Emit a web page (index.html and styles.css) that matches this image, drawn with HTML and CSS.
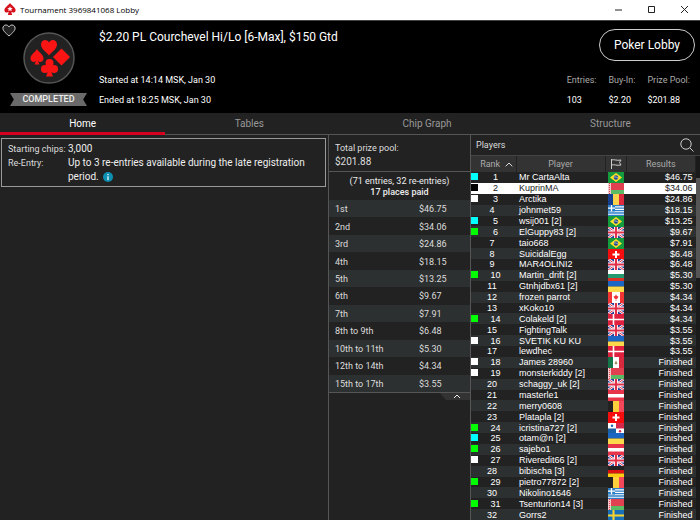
FILE: index.html
```html
<!DOCTYPE html>
<html lang="en">
<head>
  <meta charset="UTF-8">
  <title>Tournament 3969841068 Lobby</title>
  <link rel="stylesheet" href="styles.css">
</head>
<body>
  <!-- Flags, 16x11 each -->
  <svg class="defs" aria-hidden="true">
    <symbol id="br" viewBox="0 0 16 11"><path fill="#149b3e" d="M0 0h16v11H0z"/><path fill="#ffdf2b" d="M8 1l6 4.500-6 4.500-6-4.500z"/><circle cx="8" cy="5.500" r="2.200" fill="#1a4a8c"/><path d="M6 5q2-.6 4 1" stroke="#fff" stroke-width=".6" fill="none"/></symbol>
    <symbol id="by" viewBox="0 0 16 11"><path fill="#e0404f" d="M0 0h16v7H0z"/><path fill="#5cba64" d="M0 7h16v4H0z"/><path fill="#f3c9cc" d="M0 0h3v11H0z"/><path stroke="#e0404f" stroke-dasharray="1 1" d="M1.500 0v11"/></symbol>
    <symbol id="ro" viewBox="0 0 16 11"><path fill="#173f91" d="M0 0h6v11H0z"/><path fill="#fcd34d" d="M5 0h6v11H5z"/><path fill="#dd2a3f" d="M11 0h5v11h-5z"/></symbol>
    <symbol id="gr" viewBox="0 0 16 11"><path fill="#fff" d="M0 0h16v11H0z"/><path stroke="#2c7fc6" stroke-width="1.300" d="M0 .6h16M0 3.100h16M0 5.600h16M0 8h16M0 10.400h16"/><path fill="#2c7fc6" d="M0 0h7v6.500H0z"/><path stroke="#fff" stroke-width="1.300" d="M3.500 0v6.500M0 3.200h7"/></symbol>
    <symbol id="gb" viewBox="0 0 16 11"><path fill="#263f96" d="M0 0h16v11H0z"/><path stroke="#fff" stroke-width="2.400" d="M0 0l16 11M16 0L0 11"/><path stroke="#e0304a" stroke-width="1" d="M0 0l16 11M16 0L0 11"/><path stroke="#fff" stroke-width="4" d="M8 0v11M0 5.500h16"/><path stroke="#e0304a" stroke-width="2.200" d="M8 0v11M0 5.500h16"/></symbol>
    <symbol id="ch" viewBox="0 0 16 11"><path fill="#f60d0d" d="M0 0h16v11H0z"/><path stroke="#fff" stroke-width="2" d="M8 2v7M4.500 5.500h7"/></symbol>
    <symbol id="bg" viewBox="0 0 16 11"><path fill="#fff" d="M0 0h16v4H0z"/><path fill="#23996f" d="M0 4h16v4H0z"/><path fill="#dc3224" d="M0 8h16v3H0z"/></symbol>
    <symbol id="ua" viewBox="0 0 16 11"><path fill="#1b66c2" d="M0 0h16v5.500H0z"/><path fill="#fbd94a" d="M0 5.500h16V11H0z"/></symbol>
    <symbol id="ca" viewBox="0 0 16 11"><path fill="#fff" d="M0 0h16v11H0z"/><path fill="#f23434" d="M0 0h4v11H0zM12 0h4v11h-4zM8 2.500l1 1.500 1.500.5-1 2-1.200.5V9h-.6V7l-1.200-.5-1-2L7 4z"/></symbol>
    <symbol id="dk" viewBox="0 0 16 11"><path fill="#e0203f" d="M0 0h16v11H0z"/><path stroke="#fff" stroke-width="1.600" d="M5.500 0v11M0 5.500h16"/></symbol>
    <symbol id="mx" viewBox="0 0 16 11"><path fill="#fff" d="M0 0h16v11H0z"/><path fill="#15764a" d="M0 0h5v11H0z"/><path fill="#d9293f" d="M11 0h5v11h-5z"/><path fill="#a58a5c" d="M6.500 6.500L8 3.500l1.500 3L8 7.500z"/></symbol>
    <symbol id="at" viewBox="0 0 16 11"><path fill="#e8344a" d="M0 0h16v11H0z"/><path fill="#fff" d="M0 4h16v3.500H0z"/></symbol>
    <symbol id="be" viewBox="0 0 16 11"><path fill="#222" d="M0 0h5v11H0z"/><path fill="#fccf3c" d="M5 0h6v11H5z"/><path fill="#f4485a" d="M11 0h5v11h-5z"/></symbol>
    <symbol id="pa" viewBox="0 0 16 11"><path fill="#fff" d="M0 0h16v11H0z"/><path fill="#d8284a" d="M8 0h8v5.500H8z"/><path fill="#1a61a8" d="M0 5.500h8V11H0z"/><circle cx="4" cy="2.700" r="1.200" fill="#1a61a8"/><circle cx="12" cy="8.200" r="1.200" fill="#d8284a"/></symbol>
    <symbol id="de" viewBox="0 0 16 11"><path fill="#222" d="M0 0h16v4H0z"/><path fill="#dc1212" d="M0 4h16v3.500H0z"/><path fill="#fccc12" d="M0 7.500h16V11H0z"/></symbol>
    <symbol id="se" viewBox="0 0 16 11"><path fill="#1a70b8" d="M0 0h16v11H0z"/><path stroke="#fcd32b" stroke-width="2" d="M5.500 0v11M0 5.500h16"/></symbol>
  </svg>

  <header class="titlebar">
    <svg class="app-icon" viewBox="0 0 12 12"><path fill="#d5101a" d="M6 0C5 2 .4 4.200.4 7.200c0 2.200 2.700 3.100 4.300 1.600L3.900 12h4.200l-.8-3.200c1.600 1.500 4.300.6 4.300-1.600C11.600 4.200 7 2 6 0z"/><path fill="#fff" d="M6 3.300l.8 1.800 1.900.1-1.500 1.200.6 1.900L6 7.200 4.200 8.300l.6-1.900-1.500-1.200 1.900-.1z"/></svg>
    <span class="caption">Tournament 3969841068 Lobby</span>
    <div class="window-buttons">
      <button aria-label="Minimize"><svg viewBox="0 0 9 9"><path d="M1 5h7"/></svg></button>
      <button aria-label="Maximize"><svg viewBox="0 0 9 9"><path d="M1.500 1.500h6v6h-6z"/></svg></button>
      <button aria-label="Close"><svg viewBox="0 0 9 9"><path d="M1 1l7 7M8 1L1 8"/></svg></button>
    </div>
  </header>

  <section class="summary">
    <button class="favourite" aria-label="Favourite"><svg viewBox="0 0 14 13"><path d="M7 12C3 8.500.9 6.500.9 4.200.9 2.400 2.200 1 3.900 1 5.200 1 6.400 1.700 7 3c.6-1.300 1.800-2 3.100-2 1.700 0 3 1.400 3 3.200C13.100 6.500 11 8.500 7 12z"/></svg></button>
    <div class="badge">
      <svg class="suits" viewBox="0 0 52 52">
        <circle cx="26" cy="26" r="25" fill="#222" stroke="#555" stroke-width="1.500"/>
        <g fill="#fb1414">
          <path d="M26 23.500c-3-4-8-6.500-8-11 0-5.500 6.500-6 8-2 1.500-4 8-3.500 8 2 0 4.500-5 7-8 11z"/>
          <path d="M38.500 16.500l8.500 8.500-8.500 8.500L30 25z"/>
          <path d="M14 17c2 3.500 6.500 5.500 6.500 9.500 0 3.500-3.500 4.500-5.500 2.500l1.500 3.500h-5L13 29c-2 2-5.500 1-5.500-2.500 0-4 4.500-6 6.500-9.500z"/>
          <circle cx="26.500" cy="31" r="4"/><circle cx="22" cy="37" r="4.100"/><circle cx="31" cy="37" r="4.100"/>
          <path d="M25 33h3l.3 7 1.700 4.500h-7l1.700-4.500z"/>
        </g>
      </svg>
      <span class="status">COMPLETED</span>
    </div>
    <div class="event">
      <h1>$2.20 PL Courchevel Hi/Lo [6-Max], $150 Gtd</h1>
      <p>Started at 14:14 MSK, Jan 30</p>
      <p>Ended at 18:25 MSK, Jan 30</p>
    </div>
    <div class="side">
      <button class="lobby">Poker Lobby</button>
      <dl class="stats">
        <div><dt>Entries:</dt><dd>103</dd></div>
        <div><dt>Buy-In:</dt><dd>$2.20</dd></div>
        <div><dt>Prize Pool:</dt><dd>$201.88</dd></div>
      </dl>
    </div>
  </section>

  <nav class="tabs">
    <a class="active" href="#home">Home</a>
    <a href="#tables">Tables</a>
    <a href="#chips">Chip Graph</a>
    <a href="#structure">Structure</a>
  </nav>

  <main class="columns">
    <section class="info">
      <dl class="info-box">
        <dt>Starting chips:</dt><dd>3,000</dd>
        <dt>Re-Entry:</dt><dd>Up to 3 re-entries available during the late registration period. <svg class="info-icon" viewBox="0 0 10 10"><circle cx="5" cy="5" r="5" fill="#0d8fb0"/><path d="M5 4.200V8M5 2v1.200" stroke="#fff" stroke-width="1.200"/></svg></dd>
      </dl>
    </section>

    <section class="prizes">
      <div class="pool">
        <span>Total prize pool:</span>
        <strong>$201.88</strong>
      </div>
      <div class="entries">
        <span>(71 entries, 32 re-entries)</span>
        <strong>17 places paid</strong>
      </div>
      <table class="payouts">
        <tr><td>1st</td><td>$46.75</td></tr>
        <tr><td>2nd</td><td>$34.06</td></tr>
        <tr><td>3rd</td><td>$24.86</td></tr>
        <tr><td>4th</td><td>$18.15</td></tr>
        <tr><td>5th</td><td>$13.25</td></tr>
        <tr><td>6th</td><td>$9.67</td></tr>
        <tr><td>7th</td><td>$7.91</td></tr>
        <tr><td>8th to 9th</td><td>$6.48</td></tr>
        <tr><td>10th to 11th</td><td>$5.30</td></tr>
        <tr><td>12th to 14th</td><td>$4.34</td></tr>
        <tr><td>15th to 17th</td><td>$3.55</td></tr>
      </table>
      <div class="collapse">
        <button aria-label="Collapse"><svg viewBox="0 0 8 5"><path d="M1 4l3-3 3 3"/></svg></button>
      </div>
    </section>

    <section class="players">
      <div class="players-head">
        <h2>Players</h2>
        <button aria-label="Search"><svg viewBox="0 0 14 14"><circle cx="6" cy="6" r="5.200"/><path d="M9.700 9.700l3.800 3.800"/></svg></button>
      </div>
      <div class="list">
        <table class="ranking">
          <thead>
            <tr>
              <th class="rank">Rank <svg class="sort" viewBox="0 0 8 5"><path d="M.7 4.300L4 1l3.300 3.300"/></svg></th>
              <th class="player">Player</th>
              <th class="flag"><svg class="flag-icon" viewBox="0 0 12 10"><path d="M1.500 0v10M1.500 1c3-1 5 1 9.500 0L9.500 3.500 11 6c-4.500 1-6.500-1-9.500 0"/></svg></th>
              <th class="result">Results</th>
            </tr>
          </thead>
          <tbody>
            <tr class="cyan"><td>1</td><td>Mr CartaAlta</td><td><svg><use href="#br"/></svg></td><td>$46.75</td></tr>
            <tr class="black selected"><td>2</td><td>KuprinMA</td><td><svg><use href="#by"/></svg></td><td>$34.06</td></tr>
            <tr class="white"><td>3</td><td>Arctika</td><td><svg><use href="#ro"/></svg></td><td>$24.86</td></tr>
            <tr><td>4</td><td>johnmet59</td><td><svg><use href="#gr"/></svg></td><td>$18.15</td></tr>
            <tr class="cyan"><td>5</td><td>wsij001 [2]</td><td><svg><use href="#br"/></svg></td><td>$13.25</td></tr>
            <tr class="green"><td>6</td><td>ElGuppy83 [2]</td><td><svg><use href="#gb"/></svg></td><td>$9.67</td></tr>
            <tr><td>7</td><td>taio668</td><td><svg><use href="#br"/></svg></td><td>$7.91</td></tr>
            <tr><td>8</td><td>SuicidalEgg</td><td><svg><use href="#ch"/></svg></td><td>$6.48</td></tr>
            <tr><td>9</td><td>MAR4OLINI2</td><td><svg><use href="#gb"/></svg></td><td>$6.48</td></tr>
            <tr class="green"><td>10</td><td>Martin_drift [2]</td><td><svg><use href="#bg"/></svg></td><td>$5.30</td></tr>
            <tr><td>11</td><td>Gtnhjdbx61 [2]</td><td><svg><use href="#ua"/></svg></td><td>$5.30</td></tr>
            <tr><td>12</td><td>frozen parrot</td><td><svg><use href="#ca"/></svg></td><td>$4.34</td></tr>
            <tr><td>13</td><td>xKoko10</td><td><svg><use href="#gb"/></svg></td><td>$4.34</td></tr>
            <tr class="green"><td>14</td><td>Colakeld [2]</td><td><svg><use href="#dk"/></svg></td><td>$4.34</td></tr>
            <tr><td>15</td><td>FightingTalk</td><td><svg><use href="#gb"/></svg></td><td>$3.55</td></tr>
            <tr class="white"><td>16</td><td>SVETIK KU KU</td><td><svg><use href="#ua"/></svg></td><td>$3.55</td></tr>
            <tr><td>17</td><td>lewdhec</td><td><svg><use href="#dk"/></svg></td><td>$3.55</td></tr>
            <tr class="white"><td>18</td><td>James 28960</td><td><svg><use href="#mx"/></svg></td><td>Finished</td></tr>
            <tr class="white"><td>19</td><td>monsterkiddy [2]</td><td><svg><use href="#by"/></svg></td><td>Finished</td></tr>
            <tr><td>20</td><td>schaggy_uk [2]</td><td><svg><use href="#gb"/></svg></td><td>Finished</td></tr>
            <tr><td>21</td><td>masterle1</td><td><svg><use href="#at"/></svg></td><td>Finished</td></tr>
            <tr><td>22</td><td>merry0608</td><td><svg><use href="#be"/></svg></td><td>Finished</td></tr>
            <tr><td>23</td><td>Platapla [2]</td><td><svg><use href="#ch"/></svg></td><td>Finished</td></tr>
            <tr class="green"><td>24</td><td>icristina727 [2]</td><td><svg><use href="#pa"/></svg></td><td>Finished</td></tr>
            <tr class="cyan"><td>25</td><td>otam@n [2]</td><td><svg><use href="#ua"/></svg></td><td>Finished</td></tr>
            <tr class="green"><td>26</td><td>sajebo1</td><td><svg><use href="#at"/></svg></td><td>Finished</td></tr>
            <tr class="white"><td>27</td><td>Riveredit66 [2]</td><td><svg><use href="#gb"/></svg></td><td>Finished</td></tr>
            <tr><td>28</td><td>bibischa [3]</td><td><svg><use href="#de"/></svg></td><td>Finished</td></tr>
            <tr class="green"><td>29</td><td>pietro77872 [2]</td><td><svg><use href="#be"/></svg></td><td>Finished</td></tr>
            <tr><td>30</td><td>Nikolino1646</td><td><svg><use href="#gr"/></svg></td><td>Finished</td></tr>
            <tr class="green"><td>31</td><td>Tsenturion14 [3]</td><td><svg><use href="#by"/></svg></td><td>Finished</td></tr>
            <tr><td>32</td><td>Gorrs2</td><td><svg><use href="#se"/></svg></td><td>Finished</td></tr>
          </tbody>
        </table>
        <div class="scrollbar"><div class="thumb"></div></div>
      </div>
    </section>
  </main>
</body>
</html>
```
FILE: styles.css
```css
* {
  box-sizing: border-box;
}

body {
  display: flex;
  flex-direction: column;
  height: 100vh;
  margin: 0;
  overflow: hidden;
  background-color: #222;
  color: #ddd;
  font-family: Roboto, "Liberation Sans", sans-serif;
  font-size: 9px;
}

h1, h2, p, dl, dd {
  margin: 0;
  font-weight: normal;
}

button {
  padding: 0;
  border: none;
  background: none;
  color: inherit;
  font-family: inherit;
  cursor: pointer;
}

svg {
  display: block;
  fill: none;
}

table {
  border-collapse: collapse;
}

strong {
  font-weight: normal;
}

.defs {
  position: absolute;
  width: 0;
  height: 0;
}

/* Title bar */
.titlebar {
  display: flex;
  align-items: center;
  height: 20px;
  padding: 0 11px 2px 4px;
  background-color: #fff;
  color: #000;
}

.app-icon {
  width: 12px;
  height: 12px;
  margin-right: 4px;
}

.caption {
  font-family: "Open Sans", "Noto Sans", sans-serif;
  font-size: 8px;
}

.window-buttons {
  display: flex;
  gap: 24px;
  margin-left: auto;
}

.window-buttons svg {
  width: 9px;
  height: 9px;
  stroke: #222;
}

/* Tournament summary */
.summary {
  position: relative;
  display: flex;
  height: 93px;
  padding: 0 5px 0 10px;
  border-top: 1px solid #444;
  background-color: #000;
}

.favourite {
  position: absolute;
  top: 3px;
  left: 2px;
}

.favourite svg {
  width: 14px;
  height: 13px;
  stroke: #ccc;
  fill: #222;
}

.badge {
  display: flex;
  flex-direction: column;
  align-items: center;
  gap: 9px;
  width: 77px;
  padding-top: 11px;
}

.suits {
  width: 52px;
  height: 52px;
}

.status {
  width: 77px;
  background-color: #6a6a6a;
  color: #eee;
  font-weight: 500;
  line-height: 13px;
  text-align: center;
  clip-path: polygon(0 0, 100% 0, 95% 50%, 100% 100%, 0 100%, 5% 50%);
}

.event {
  padding: 8px 0 0 12px;
  color: #fff;
}

.event h1 {
  margin-bottom: 25px;
  font-size: 12px;
  line-height: 16px;
}

.event p {
  line-height: 20px;
}

.side {
  display: flex;
  flex-direction: column;
  align-items: flex-end;
  margin-left: auto;
  padding-top: 8px;
}

.lobby {
  width: 96px;
  height: 32px;
  border: 1px solid #ccc;
  border-radius: 16px;
  color: #fff;
  font-size: 12px;
}

.stats {
  display: flex;
  gap: 12px;
  padding: 9px 5px 0 0;
  line-height: 20px;
}

.stats dt {
  color: #aaa;
}

.stats dd {
  color: #fff;
}

/* Tabs */
.tabs {
  display: flex;
  height: 22px;
  border-bottom: 1px solid #555;
}

.tabs a {
  flex: 1 1 auto;
  height: 22px;
  color: #999;
  font-size: 10px;
  line-height: 22px;
  text-align: center;
  text-decoration: none;
}

.tabs .active {
  border-bottom: 3px solid #d7001f;
  color: #fff;
}

.columns {
  display: flex;
  flex: 1;
  min-height: 0;
}

/* General info */
.info {
  flex: 1;
  padding: 3px 2px 0 1px;
}

.info-box {
  display: grid;
  grid-template-columns: 60px 1fr;
  padding: 3px 6px 2px;
  border: 1px solid #999;
  line-height: 14px;
}

.info-box dd {
  color: #eee;
  font-size: 10px;
}

.info-icon {
  display: inline-block;
  width: 10px;
  height: 10px;
  margin-left: 2px;
  vertical-align: -2px;
}

/* Prizes */
.prizes {
  width: 142px;
  border-left: 1px solid #555;
}

.pool,
.entries {
  display: flex;
  flex-direction: column;
}

.pool {
  height: 37px;
  padding: 7px 6px 0;
  border-bottom: 1px solid #555;
  line-height: 13px;
}

.pool strong {
  font-size: 10px;
}

.entries {
  height: 28px;
  padding-top: 4px;
  color: #eee;
  line-height: 11px;
  text-align: center;
}

.entries strong {
  font-weight: 500;
}

.payouts {
  width: 100%;
  height: 192px;
}

.payouts tr:nth-child(odd) {
  background-color: #2d3030;
}

.payouts td {
  padding: 1px 0 0 6px;
}

.payouts td:first-child {
  width: 84px;
}

.collapse {
  display: flex;
  justify-content: flex-end;
  border-top: 1px solid #555;
}

.collapse button {
  display: flex;
  align-items: center;
  justify-content: center;
  width: 30px;
  height: 7px;
  padding-left: 3px;
  background-color: #333;
  clip-path: polygon(0 0, 100% 0, 100% 100%, 20% 100%);
}

.collapse svg {
  width: 8px;
  height: 5px;
  stroke: #eee;
}

/* Players */
.players {
  display: flex;
  flex-direction: column;
  width: 230px;
  border-left: 1px solid #555;
}

.players-head {
  display: flex;
  align-items: center;
  justify-content: space-between;
  height: 20px;
  padding: 0 6px 0 5px;
}

.players-head h2 {
  font-size: 9px;
}

.players-head svg {
  width: 14px;
  height: 14px;
  stroke: #ccc;
}

.list {
  display: flex;
  flex: 1;
  min-height: 0;
  border-top: 1px solid #444;
}

.ranking {
  flex: 1;
  height: 100%;
  table-layout: fixed;
  color: #fff;
  font-family: "Liberation Sans", Arial, sans-serif;
  font-size: 9px;
  line-height: 10px;
}

.ranking th {
  height: 16px;
  padding: 0;
  border-right: 1px solid #222;
  background-color: #333;
  color: #aaa;
  font-family: Roboto, "Liberation Sans", sans-serif;
  font-weight: normal;
}

.ranking .rank {
  width: 45px;
  padding-left: 7px;
}

.ranking .player {
  width: 89px;
}

.ranking .flag {
  width: 21px;
}

.sort {
  display: inline-block;
  width: 8px;
  height: 5px;
  margin-left: 3px;
  stroke: #ddd;
}

.flag-icon {
  width: 12px;
  height: 10px;
  margin: 0 auto;
  stroke: #ccc;
}

.ranking td {
  padding: 0;
}

.ranking td:nth-child(1) {
  padding-right: 3px;
  text-align: center;
}

.ranking td:nth-child(2) {
  padding-left: 3px;
}

/* flags may touch the row below */
.ranking td:nth-child(3) svg {
  width: 16px;
  height: 11px;
  margin: 0 auto -1px;
}

.ranking td:nth-child(4) {
  padding-right: 3px;
  text-align: right;
}

.ranking tbody tr:nth-child(even) {
  background-color: #2d3030;
}

.ranking tbody tr.selected {
  background-color: #fff;
  color: #222;
}

/* Player note colour */
.cyan td:first-child::before,
.black td:first-child::before,
.white td:first-child::before,
.green td:first-child::before {
  content: "";
  float: left;
  width: 7px;
  height: 7px;
  margin-top: 1px;
}

.cyan td:first-child::before {
  background-color: #0ff;
}

.black td:first-child::before {
  background-color: #000;
}

.white td:first-child::before {
  background-color: #fff;
}

.green td:first-child::before {
  background-color: #0f0;
}

.scrollbar {
  width: 4px;
  background-color: #1a1a1a;
}

.thumb {
  height: 100px;
  margin-top: 22px;
  background-color: #555;
}
```
